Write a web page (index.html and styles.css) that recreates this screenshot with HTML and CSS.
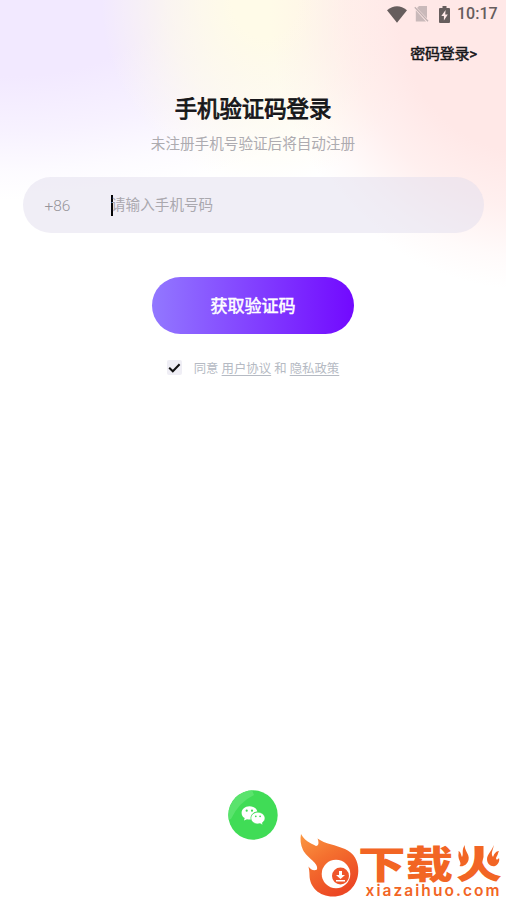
FILE: index.html
```html
<!DOCTYPE html>
<html lang="zh-CN">
<head>
<meta charset="utf-8">
<title>手机验证码登录</title>
<link rel="stylesheet" href="styles.css">
</head>
<body>
<div class="screen">
  <header class="status">
    <svg class="wifi" width="20" height="17" viewBox="0 0 20 17"><path d="M0 4.2Q10-3.7 20 4.2L10 16.7Z" fill="#665d5d"/></svg>
    <svg class="sim" width="15" height="16" viewBox="0 0 15 16"><path d="M5 0H13V12.5L3 2ZM1.8 4.3L12 15.5H1.8Z" fill="#c9b9ba"/><path d="M.8 1.2L14 15.2" stroke="#c0b1b2" stroke-width="1.3"/></svg>
    <svg class="battery" width="11" height="17" viewBox="0 0 11 17"><path d="M3.500 0H7.500V2H10Q11 2 11 3V16Q11 17 10 17H1Q0 17 0 16V3Q0 2 1 2H3.500Z" fill="#665d5d"/><path d="M6.600 4L2.300 10H4.900V14.500L8.800 8.400H6.200Z" fill="#ffe9e8"/></svg>
    <span class="time">10:17</span>
  </header>
  <a class="switch">密码登录&gt;</a>
  <main class="login">
    <h1>手机验证码登录</h1>
    <p class="hint">未注册手机号验证后将自动注册</p>
    <div class="phone"><span class="code">+86</span><i class="caret"></i><span class="placeholder">请输入手机号码</span></div>
    <button class="submit">获取验证码</button>
    <div class="agree">
      <span class="check"><svg width="13" height="10" viewBox="0 0 13 10"><path d="M1.2 4.8L4.8 8.3L11.6 1.3" fill="none" stroke="#111" stroke-width="2"/></svg></span>
      <span>同意 <u>用户协议</u> 和 <u>隐私政策</u></span>
    </div>
  </main>
  <svg class="wechat" width="50" height="50" viewBox="0 0 50 50">
    <defs><clipPath id="disc"><circle cx="25" cy="25" r="24.700"/></clipPath></defs>
    <circle cx="25" cy="25" r="24.700" fill="#40dc56"/>
    <path d="M0 0H24L26 5Q11 12 3 29L0 30Z" fill="#5ae36d" clip-path="url(#disc)"/>
    <path d="M21.500 16.200C16.900 16.200 13.600 19.200 13.600 22.900C13.600 25.100 14.800 26.900 16.700 28.100L16 30.500L19 29.200C20.500 29.600 21.800 29.600 23 29.400C22.200 24.800 25.500 21.800 29.400 21.600C28.500 18.300 25.300 16.200 21.500 16.200Z" fill="#fff"/>
    <path d="M29.700 22.200C26 22.200 22.900 24.800 22.900 28C22.900 31.500 26.200 33.900 29.800 33.900L32 33.600L34.800 35L34.300 32.800C35.800 31.700 37 30 37 28.100C37 24.900 33.600 22.200 29.700 22.200Z" fill="#fff" stroke="#40dc56" stroke-width=".6"/>
    <g fill="#40dc56"><circle cx="18.700" cy="20.700" r="1.100"/><circle cx="24" cy="20.700" r="1.100"/><circle cx="27.800" cy="26.300" r=".9"/><circle cx="32.100" cy="26.300" r=".9"/></g>
  </svg>
  <svg class="brand" width="206" height="70" viewBox="300 830 206 70">
    <defs><linearGradient id="fire" x1="0" y1="0" x2=".55" y2="1"><stop offset="0" stop-color="#fb9843"/><stop offset=".45" stop-color="#f4702f"/><stop offset="1" stop-color="#ec4824"/></linearGradient></defs>
    <path d="M301 834C304 840 310 843 316 846C319 846 319 842 317.500 838.500C325 844 336 845 345 849C354 853 358.500 861 358.300 871C358 886 347 896.500 333 896.500C319 896.500 309.500 887 309.500 875C309.500 872 309 869 308.500 866.500C310.500 869.500 314 871.500 317 869.500C319 863 307 858 303 850C300.500 845 300 839 301 834Z" fill="url(#fire)"/>
    <circle cx="336" cy="874" r="14.300" fill="#fff"/><circle cx="340.500" cy="876" r="8.500" fill="#ef552a"/>
    <path d="M339 871H342V875H345L340.500 879L336 875H339ZM336 880H345V881.500H336Z" fill="#fff"/>
    <text class="brand-name" x="358" y="878" textLength="95" lengthAdjust="spacingAndGlyphs">下载</text>
    <text class="brand-name" x="456" y="878" textLength="46" lengthAdjust="spacingAndGlyphs">火</text>
    <g fill="#fff"><path d="M455 843H474V858L468 866L455 868Z"/><path d="M483.500 843H503V867H489L483.500 860Z"/></g>
    <path d="M474.500 846H483.500V857L482 863H475Z" fill="#f26524"/>
    <g fill="#f26524"><path d="M465 845C463.500 850 470 854 468.500 860C467 865 463 867 459.500 866C462 863 459 861 458.500 857C458 855 459 853 458.500 851C461 852 461 855 462 857C464 854 461 850 465 845Z"/><path d="M493.500 845C493 850 487 854 487 859C487 864 491 867 495 866C498 865 500 861 499 858C496.500 861 495 859 497 856C498 854 498 853 499 851C496 851 494 854 493 857C490 853 494 849 493.500 845Z"/></g>
    <text class="brand-url" x="365.500" y="895.500" textLength="134">xiazaihuo.com</text>
  </svg>
</div>
</body>
</html>
```

FILE: styles.css
```css
* { box-sizing: border-box; }
body { margin: 0; }
.screen {
  position: relative;
  width: 506px;
  height: 900px;
  overflow: hidden;
  display: flex;
  flex-direction: column;
  font-family: Roboto, "Noto Sans CJK SC", sans-serif;
  color: #17171a;
  background:
    radial-gradient(ellipse 260px 275px at 530px 15px, #ffe8e7 0, #ffe8e7 50%, #ffe8e7aa 70%, #ffe8e733 88%, #ffe8e700 100%),
    radial-gradient(ellipse 165px 185px at 265px 0, #fffbe8 0, #fffbe8 20%, #fffbe899 60%, #fffbe800 100%),
    radial-gradient(ellipse 400px 200px at 10px 0, #f2e9ff 0, #f2e9ff 38%, #f2e9ff99 65%, #f2e9ff33 85%, #f2e9ff00 100%),
    #fff;
}
.status {
  height: 28px;
  padding-right: 9px;
  display: flex;
  align-items: center;
  justify-content: flex-end;
}
.sim { margin-left: 7px; }
.battery { margin-left: 10px; margin-right: 7px; }
.time { width: 40px; font-size: 16px; font-weight: 500; line-height: 28px; letter-spacing: 0; color: #665d5d; }
.switch { align-self: flex-end; margin: 15px 29px 0 0; font-size: 15px; line-height: 22px; -webkit-text-stroke: .5px; letter-spacing: -.2px; }
.login { display: flex; flex-direction: column; align-items: center; }
h1 { margin: 28px 0 0; font-size: 22.400px; line-height: 32px; font-weight: 400; -webkit-text-stroke: .9px; }
.hint { margin: 9px 0 0; font-size: 14.600px; line-height: 20px; color: #adabb0; }
.phone {
  margin-top: 23px;
  width: 461px;
  height: 56px;
  padding-left: 22px;
  border-radius: 28px;
  background: rgba(225, 221, 237, .5);
  display: flex;
  align-items: center;
  color: #aaa8ae;
  font-size: 14.600px;
}
.code { width: 66px; padding-top: 1px; font-size: 15.500px; font-weight: 300; color: #96949a; }
.caret { width: 2.500px; height: 21px; margin-right: -2px; background: #050505; }
.placeholder { padding-bottom: 3px; }
.submit {
  margin-top: 44px;
  width: 202px;
  height: 57px;
  padding: 2px 0 0;
  border: 0;
  border-radius: 29px;
  background: linear-gradient(90deg, #9278ff, #7209ff);
  color: #fff;
  font: 400 17px/55px Roboto, "Noto Sans CJK SC", sans-serif;
  -webkit-text-stroke: .5px;
}
.agree { margin-top: 24px; height: 20px; display: flex; align-items: center; font-size: 12.400px; color: #b5bac3; white-space: nowrap; }
.check { width: 15px; height: 15px; margin: 0 12px 1px 0; display: flex; align-items: center; justify-content: center; background: #efeef5; border-radius: 2px; }
.agree u { text-underline-offset: 2px; text-decoration-thickness: 1px; }
.wechat { position: absolute; left: 228px; top: 790px; }
.brand { position: absolute; left: 300px; top: 830px; }
.brand-name { font: 900 38px "Noto Sans CJK SC", sans-serif; fill: #f26524; }
.brand-url { font: 600 15.500px Inter, sans-serif; fill: #f26524; }
```
